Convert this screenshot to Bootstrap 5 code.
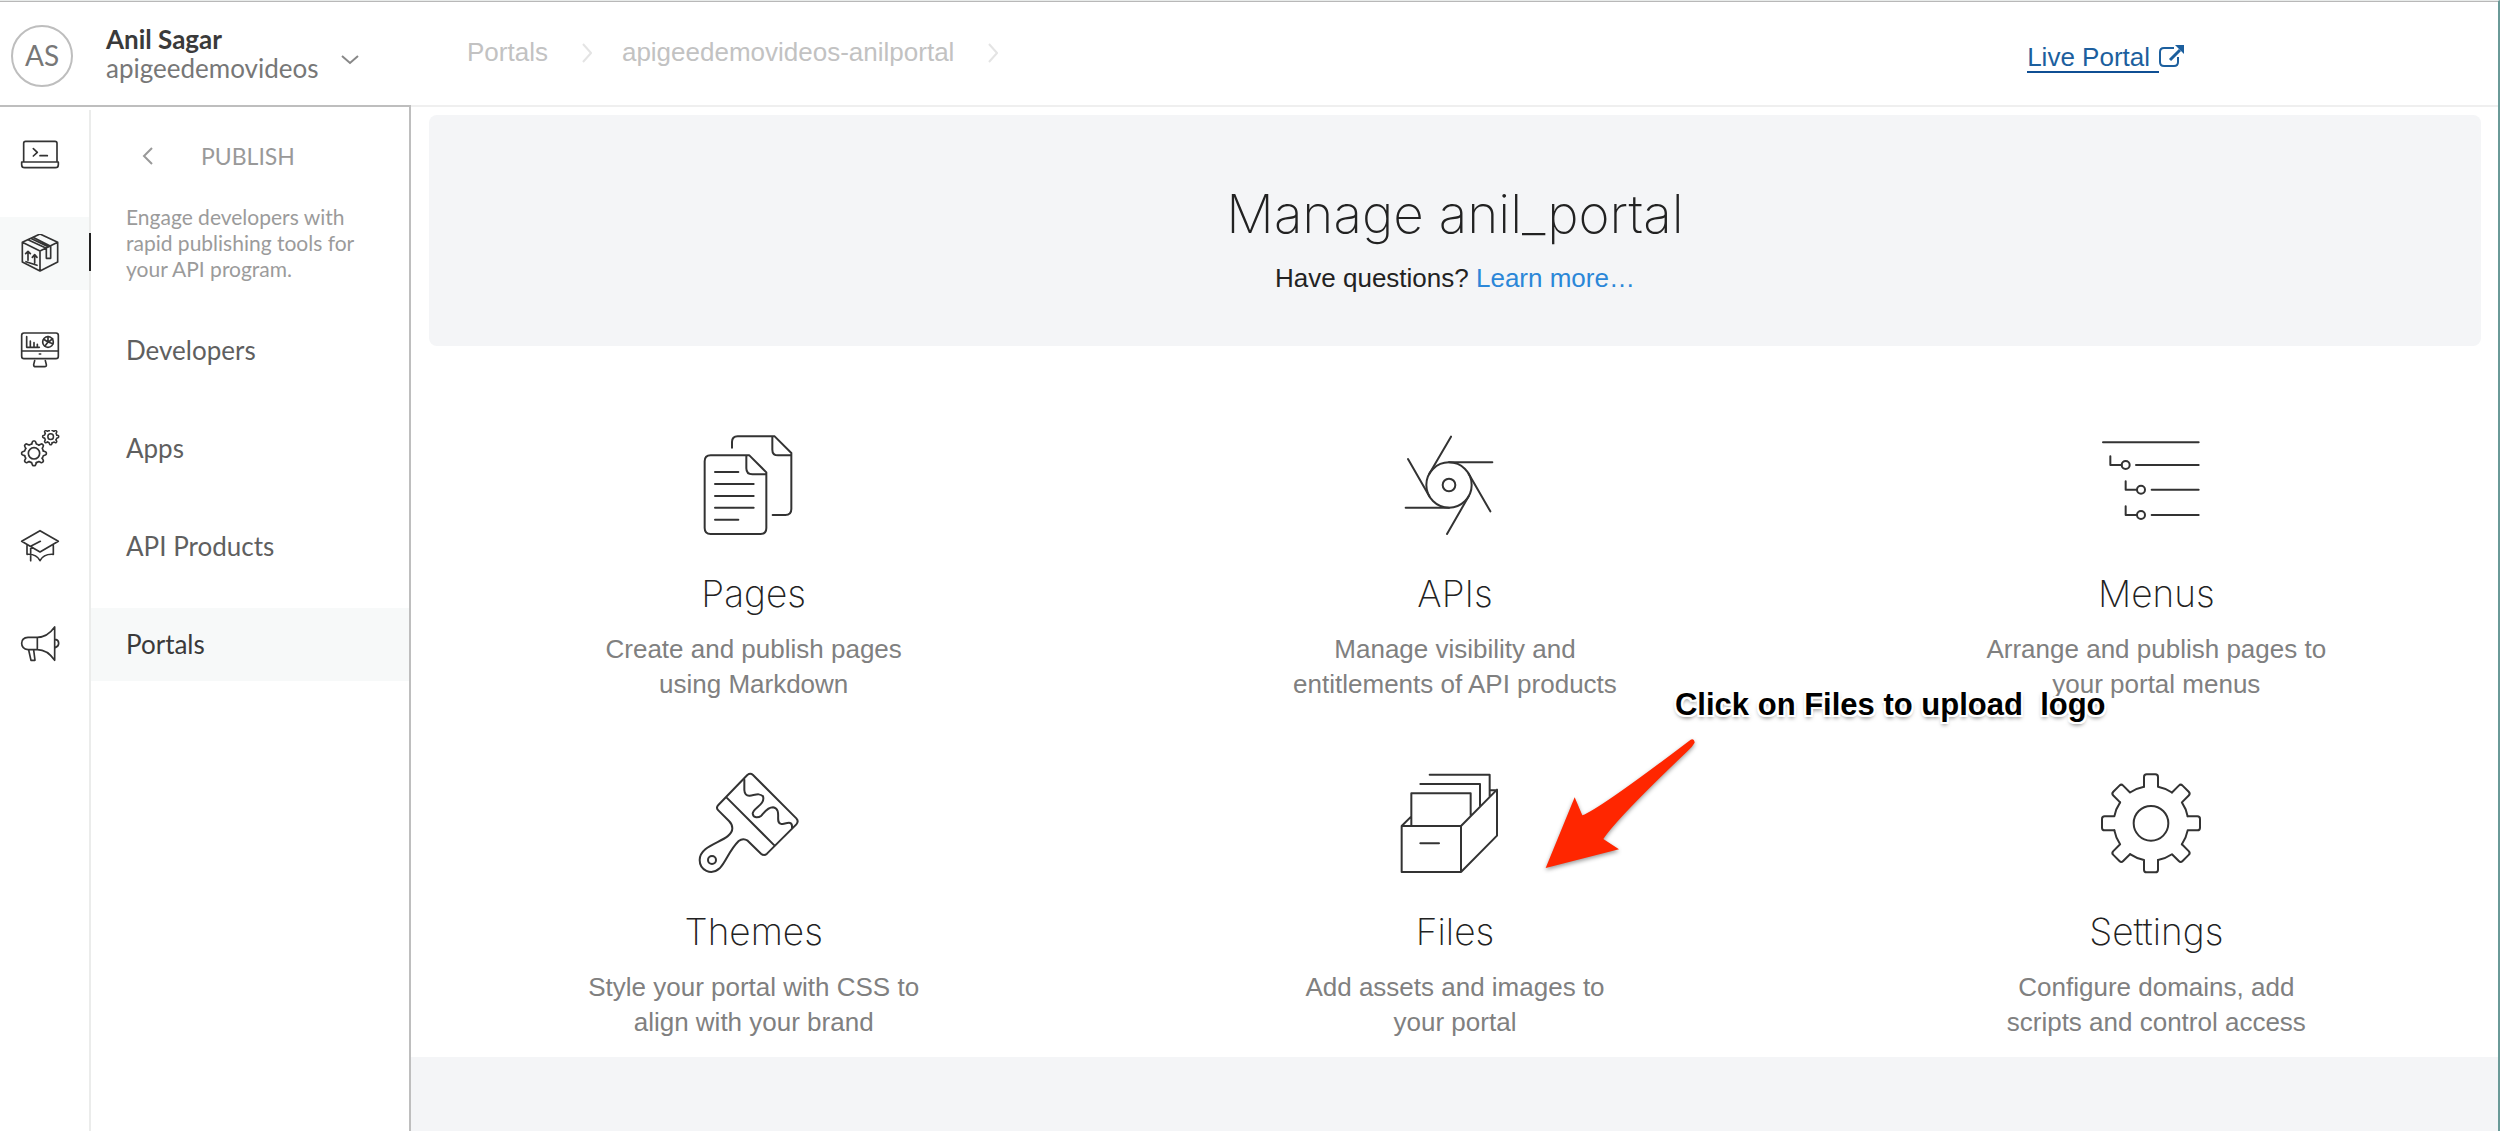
<!DOCTYPE html>
<html lang="en">
<head>
<meta charset="utf-8">
<meta name="viewport" content="width=device-width, initial-scale=1">
<title>Manage anil_portal</title>
<link href="https://cdn.jsdelivr.net/npm/bootstrap@5.3.0/dist/css/bootstrap.min.css" rel="stylesheet">
<style>
  body { font-family: "Liberation Sans", Arial, sans-serif; font-size: 26px; line-height: 35px; color: #222; background: #f4f5f7; }
  a { color: inherit; text-decoration: none; }
  .shell { min-height: 100vh; border-top: 1px solid #e8ebea; border-right: 2px solid #6a9a98; }
  .topbar { height: 106px; border-top: 1px solid #b8b8b8; border-bottom: 2px solid #efefef; }
  .account { width: 411px; height: 105px; padding: 4px 51px 0 11px; border: 0; border-bottom: 2px solid #bebebe; background: #fff; font-family: Lato, sans-serif; color: #777; }
  .avatar { width: 62px; height: 62px; border: 2px solid #bebebe; font-size: 28px; }
  .account-text { margin-left: 33px; line-height: 29px; font-size: 26px; padding-bottom: 4px; }
  .account-name { color: #3a3a3a; font-weight: 700; font-size: 26px; }
  .crumbs { margin-left: 56px; color: #c2c2c2; gap: 34px; margin-bottom: 2px; }
  .crumbs svg { stroke: #e4e4e4; }
  .crumbs .next-crumb { margin-left: -4px; }
  .live { margin-right: 313px; margin-top: 9px; color: #1c5f9e; }
  .live span { border-bottom: 2px solid #0f4f94; padding-right: 9px; line-height: 27px; display: inline-block; }
  .rail { width: 91px; border-right: 2px solid #ebeceb; margin-top: 3px; padding-top: 9px; gap: 25px; }
  .rail a { height: 73px; width: 89px; padding-right: 9px; }
  .rail a.active { background: #f7f9f9; position: relative; }
  .rail a.active::after { content: ""; position: absolute; right: -2px; top: 16px; width: 2px; height: 38px; background: #222; }
  .rail svg { fill: none; stroke: #333; stroke-width: 5; stroke-linejoin: round; stroke-linecap: round; }
  .panel { width: 320px; border-right: 2px solid #bebebe; font-family: Lato, sans-serif; color: #5f5f5f; }
  .panel-head { padding: 32px 0 0 51px; gap: 47px; font-size: 23px; line-height: 34px; color: #999; }
  .panel-note { padding: 31px 0 0 35px; margin-bottom: 32px; font-size: 21px; line-height: 26px; color: #9b9b9b; max-width: 290px; }
  .panel-list { gap: 25px; }
  .panel-list a { height: 73px; padding-left: 35px; }
  .panel-list a.active { background: #f7f9f9; color: #3a3a3a; }
  .board { padding: 8px 17px 17px 18px; overflow: hidden; }
  .hero { background: #f4f5f7; border-radius: 8px; padding: 67px 0 50px; }
  .thin { font-family: Inter, "Liberation Sans", sans-serif; font-weight: 200; color: #222; }
  .hero h1 { font-size: 53px; line-height: 64px; margin-bottom: 15px; }
  .hero a { color: #2b87d8; }
  .tiles { margin-top: 89px; display: grid; grid-template-columns: repeat(3, 1fr); gap: 71px 52px; }
  .tile { position: relative; text-align: center; color: #808080; }
  .tile > svg { margin-right: 10px; fill: none; stroke: #333; stroke-width: 6; stroke-linejoin: round; stroke-linecap: round; overflow: visible; }
  .tile h2 { font-size: 37px; line-height: 48px; margin: 35px 0 14px; }
  .tile p { max-width: 354px; margin: 0 auto; }
  .note-text { position: absolute; left: calc(50% + 220px); top: -88px; z-index: 2; white-space: pre; color: #000; font-weight: 700; font-size: 31px; line-height: 40px;
    text-shadow: 2px 0 #fff, -2px 0 #fff, 0 2px #fff, 0 -2px #fff, 2px 2px #fff, -2px 2px #fff, 2px -2px #fff, -2px -2px #fff, 0 3px 4px #777; }
  .tile > .note-arrow { position: absolute; left: calc(50% + 90px); top: -35px; margin: 0; fill: #ff2600; stroke: none; filter: drop-shadow(0 2px 2px rgba(0, 0, 0, .4)); }
</style>
</head>
<body>
<div class="shell d-flex flex-column">
  <header class="topbar bg-white d-flex align-items-center">
    <button type="button" class="account d-flex align-items-center text-start align-self-start">
      <span class="avatar rounded-circle d-flex align-items-center justify-content-center flex-shrink-0">AS</span>
      <span class="account-text"><span class="account-name d-block">Anil Sagar</span><span class="d-block">apigeedemovideos</span></span>
      <svg class="ms-auto mt-2" width="20" height="12" viewBox="0 0 20 12" fill="none" stroke="#888" stroke-width="2"><path d="M2 2l8 7 8-7"/></svg>
    </button>
    <nav class="crumbs d-flex align-items-center" aria-label="Breadcrumb">
      <a href="#">Portals</a>
      <svg width="10" height="20" viewBox="0 0 10 20" fill="none" stroke-width="2"><path d="M1 1l8 9-8 9"/></svg>
      <a href="#" class="next-crumb">apigeedemovideos-anilportal</a>
      <svg width="10" height="20" viewBox="0 0 10 20" fill="none" stroke-width="2"><path d="M1 1l8 9-8 9"/></svg>
    </nav>
    <a href="#" class="live ms-auto d-flex align-items-center"><span>Live Portal</span>
      <svg class="mb-1" width="26" height="24" viewBox="0 0 26 24" fill="none" stroke="#1c5f9e" stroke-width="2"><path d="M15 4H5q-4 0-4 4v10q0 4 4 4h10q4 0 4-4v-5"/><path d="M11 16L21 6" stroke-width="3"/><path d="M16 1h9v9z" fill="#1c5f9e" stroke="none"/></svg>
    </a>
  </header>
  <div class="d-flex flex-grow-1">
    <aside class="d-flex bg-white flex-shrink-0">
      <nav class="rail d-flex flex-column" aria-label="Sections">
        <a href="#" aria-label="Develop" class="d-flex align-items-center justify-content-center"><svg width="40" height="40" viewBox="60 409 120 120"><path d="M71 486V431q0-6 6-6h88q6 0 6 6v55M65 487h110v8q0 9-9 9H74q-9 0-9-9zM100 447l12 11-12 11M120 468h22"/></svg></a>
        <a href="#" aria-label="Publish" class="active d-flex align-items-center justify-content-center"><svg width="40" height="40" viewBox="60 703 120 120"><path d="M120 703l53 25v59l-53 27-53-27v-59zM67 728l53 26 53-26M120 754v60M84 720l55 26v30h13v-36L99 713M92 716l54 26M84 755v27M77 762l7-7 7 7M104 766v24M97 773l7-8 7 8M78 786l33 11"/></svg></a>
        <a href="#" aria-label="Analyze" class="d-flex align-items-center justify-content-center"><svg width="40" height="40" viewBox="60 97 120 120"><rect x="65" y="100" width="110" height="77" rx="7"/><path d="M65 154h110M118 163h4M104 183l-3 12q0 6 6 6h27q6 0 5-6l-3-12M80 111v32h38M91 143v-19M102 143v-14M112 143v-9"/><circle cx="144" cy="127" r="16"/><path d="M144 127V111M144 127l-13-8M144 127l15 5M144 127l-9 12M146 127l12-10"/></svg></a>
        <a href="#" aria-label="Admin" class="d-flex align-items-center justify-content-center"><svg width="40" height="40" viewBox="60 391 120 120"><defs><path id="tooth" d="M-7-28L-5-34q1-3 3-3h4q2 0 3 3L7-28A29 29 0 0 1 14.9-24.7"/><g id="cog"><use href="#tooth"/><use href="#tooth" transform="rotate(45)"/><use href="#tooth" transform="rotate(90)"/><use href="#tooth" transform="rotate(135)"/><use href="#tooth" transform="rotate(180)"/><use href="#tooth" transform="rotate(225)"/><use href="#tooth" transform="rotate(270)"/><use href="#tooth" transform="rotate(315)"/></g></defs><use href="#cog" transform="translate(102 461)"/><circle cx="102" cy="461" r="17"/><g transform="translate(152 411) scale(.65)" stroke-width="7"><use href="#cog"/><circle r="13"/></g></svg></a>
        <a href="#" aria-label="Learn" class="d-flex align-items-center justify-content-center"><svg width="40" height="40" viewBox="60 682 120 120"><path d="M120 690l55 32-55 32-55-32zM121 722l-29 15v43M81 735v26q28-2 39 19 11-21 40-19v-26"/></svg></a>
        <a href="#" aria-label="Announcements" class="d-flex align-items-center justify-content-center"><svg width="40" height="40" viewBox="60 976 120 120"><path d="M164 979v100q-22-32-52-32H84q-19-2-19-19t19-18h28q30 0 52-31zM112 1010v37M166 1016q10 2 10 12t-10 13M86 1048l7 31h12l-4-31"/></svg></a>
      </nav>
      <div class="panel">
        <div class="panel-head d-flex align-items-center">
          <svg width="12" height="20" viewBox="0 0 12 20" fill="none" stroke="#999" stroke-width="2"><path d="M10 2L2 10l8 8"/></svg>
          <span>PUBLISH</span>
        </div>
        <p class="panel-note">Engage developers with rapid publishing tools for your API program.</p>
        <nav class="panel-list d-flex flex-column" aria-label="Publish">
          <a href="#" class="d-flex align-items-center">Developers</a>
          <a href="#" class="d-flex align-items-center">Apps</a>
          <a href="#" class="d-flex align-items-center">API Products</a>
          <a href="#" class="active d-flex align-items-center" aria-current="page">Portals</a>
        </nav>
      </div>
    </aside>
    <main class="board bg-white flex-grow-1 align-self-start">
      <section class="hero text-center">
        <h1 class="thin">Manage anil_portal</h1>
        <p class="mb-0">Have questions? <a href="#">Learn more…</a></p>
      </section>
      <section class="tiles">
        <a href="#" class="tile">
          <svg width="100" height="100" viewBox="414 108 300 300"><path d="M565 169H449q-18 0-18 18v200q0 18 18 18h149q18 0 18-18V220zM556 169v39q0 18 18 18h42M462 219h70M462 255h116M462 291h116M462 326h116M462 362h70M513 146v-17q0-17 17-17H641l50 50v168q0 18-18 18h-38M634 112v40q0 17 17 17h40"/></svg>
          <h2 class="thin">Pages</h2>
          <p>Create and publish pages using Markdown</p>
        </a>
        <a href="#" class="tile">
          <svg width="100" height="100" viewBox="420 108 300 300"><circle cx="567" cy="258" r="68"/><circle cx="567" cy="258" r="19"/><path d="M567 190H697M567 326H437M626 224L691 337M508 292L444 180M508 224L573 113M626 292L561 405"/></svg>
          <h2 class="thin">APIs</h2>
          <p>Manage visibility and entitlements of API products</p>
        </a>
        <a href="#" class="tile">
          <svg width="100" height="100" viewBox="453 108 300 300"><path d="M459 130H746M558 198H746M605 272H746M605 348H746M481 172v26h34M527 247v25h34M527 322v26h34"/><circle cx="527" cy="198" r="12"/><circle cx="573" cy="272" r="12"/><circle cx="573" cy="348" r="12"/></svg>
          <h2 class="thin">Menus</h2>
          <p>Arrange and publish pages to your portal menus</p>
        </a>
        <a href="#" class="tile">
          <svg width="100" height="100" viewBox="414 102 300 300"><path d="M559 108q9-7 17 0L706 238q8 9 0 18L618 344q-9 8-18 0L560 305q-14-9-27 1C503 336 496 368 476 388C450 411 416 393 416 363C416 312 514 308 514 268Q514 256 504 246L472 214q-8-8 0-16zM497 176L640 319"/><path d="M550 122v31q1 18 16 17c20-3 29-8 40 2 8 25-31 35-31 52 2 14 17 13 26 6 9-9 18-25 35-25 30 5 3 49 25 50 12 0 34-13 32 10"/><circle cx="453" cy="363" r="12"/></svg>
          <h2 class="thin">Themes</h2>
          <p>Style your portal with CSS to align with your brand</p>
        </a>
        <a href="#" class="tile">
          <svg width="100" height="100" viewBox="420 342 300 300"><path d="M425 501H603V639H425zM603 501L711 392V530L603 639M425 501L454 472M454 501V403H632V470M481 375H660V441M509 347H689V413M690 394H711M481 553H537"/></svg>
          <h2 class="thin">Files</h2>
          <p>Add assets and images to your portal</p>
          <span class="note-text">Click on Files to upload  logo</span>
          <svg class="note-arrow" width="150" height="132" viewBox="855 238 450 396"><path d="M1292 243q10-4 12 9Q1297 265 1280 280Q1070 480 1030 541L1077 572 857 628 944 416 967 470Q1020 450 1292 243z"/></svg>
        </a>
        <a href="#" class="tile">
          <svg width="100" height="100" viewBox="453 342 300 300"><defs><path id="bigtooth" d="M-21-110V-139q0-8 8-8H13q8 0 8 8V-110A112 112 0 0 1 62.9-92.6"/></defs><g transform="translate(603 493)"><circle r="52"/><use href="#bigtooth"/><use href="#bigtooth" transform="rotate(45)"/><use href="#bigtooth" transform="rotate(90)"/><use href="#bigtooth" transform="rotate(135)"/><use href="#bigtooth" transform="rotate(180)"/><use href="#bigtooth" transform="rotate(225)"/><use href="#bigtooth" transform="rotate(270)"/><use href="#bigtooth" transform="rotate(315)"/></g></svg>
          <h2 class="thin">Settings</h2>
          <p>Configure domains, add scripts and control access</p>
        </a>
      </section>
    </main>
  </div>
</div>
<script src="https://cdn.jsdelivr.net/npm/bootstrap@5.3.0/dist/js/bootstrap.bundle.min.js"></script>
</body>
</html>
